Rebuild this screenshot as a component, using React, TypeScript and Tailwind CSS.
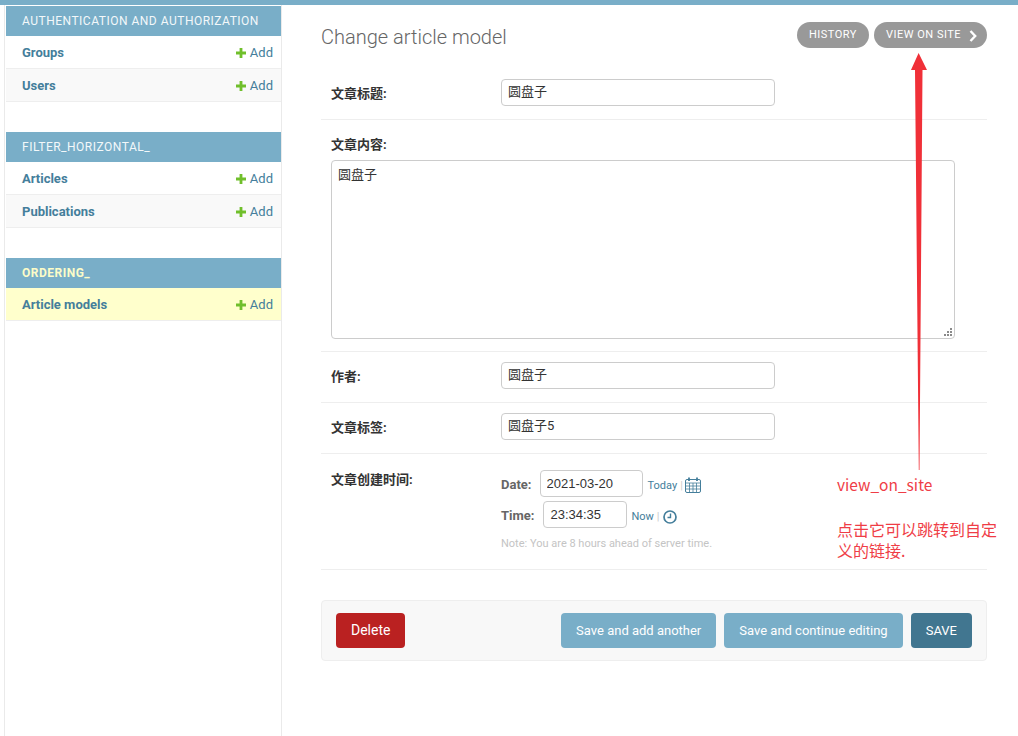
const font = "font-['Roboto','Noto_Sans_CJK_SC',sans-serif]";

const modules = [
  { title: "AUTHENTICATION AND AUTHORIZATION", rows: ["Groups", "Users"] },
  { title: "FILTER_HORIZONTAL_", rows: ["Articles", "Publications"] },
  { title: "ORDERING_", rows: ["Article models"], current: true },
];

function PlusIcon() {
  return (
    <svg width="10" height="10" viewBox="0 0 10 10" className="shrink-0">
      <path d="M3.6 0h2.8v3.6H10v2.8H6.4V10H3.6V6.4H0V3.6h3.6z" fill="#70bf2b" />
    </svg>
  );
}

function Sidebar() {
  return (
    <aside className="ml-[4px] w-[278px] shrink-0 border-x border-[#eaeaea] pl-px pt-px">
      {modules.map((mod) => (
        <div key={mod.title} className="mb-[30px]">
          <div className="flex h-[30px] items-center bg-[#79aec8] px-4 text-[12px] tracking-[0.5px]">
            <span className={mod.current ? "font-bold text-[#fcfcc8]" : "text-[#f3f8fa]"}>{mod.title}</span>
          </div>
          {mod.rows.map((row, i) => (
            <div
              key={row}
              className={`flex h-[33px] items-center justify-between border-b border-[#eeeeee] pl-4 pr-2 pt-[2px] text-[13px] ${
                mod.current ? "bg-[#ffffcc]" : i % 2 ? "bg-[#f9f9f9]" : "bg-white"
              }`}
            >
              <span className="font-bold text-[#447e9b]">{row}</span>
              <span className="flex items-center gap-[4px] text-[#447e9b]">
                <PlusIcon />
                Add
              </span>
            </div>
          ))}
        </div>
      ))}
    </aside>
  );
}

function TextRow({ label, value, className }: { label: string; value: string; className: string }) {
  return (
    <div className={`flex items-start border-b border-[#eeeeee] pl-[10px] ${className}`}>
      <label className="mt-[7px] w-[170px] text-[13px] font-bold leading-[16px] text-[#333333]">{label}</label>
      <input
        readOnly
        value={value}
        className="h-[27px] w-[274px] rounded-[4px] border border-[#cccccc] px-[6px] pb-[4px] text-[13px] text-[#333333] outline-none"
      />
    </div>
  );
}

function CalendarIcon() {
  return (
    <svg width="16" height="16" viewBox="0 0 16 16" fill="none" stroke="#447e9b" strokeWidth="1" className="mt-[2px]">
      <rect x="0.5" y="2.5" width="15" height="13" rx="1.5" />
      <path d="M0.5 6h15M0.5 9h15M0.5 12h15M4.5 6v9M8 6v9M11.5 6v9" strokeWidth="0.8" />
      <path d="M4 0.5v3.5M12 0.5v3.5" strokeWidth="1.8" />
    </svg>
  );
}

function ClockIcon() {
  return (
    <svg width="14" height="14" viewBox="0 0 14 14" fill="none" stroke="#447e9b" className="mt-[4px]">
      <circle cx="7" cy="7" r="6" strokeWidth="1.7" />
      <path d="M7.5 3.5v4H4.5" strokeWidth="1.4" />
    </svg>
  );
}

function DateTimeRow() {
  return (
    <div className="flex h-[116px] items-start border-b border-[#eeeeee] pl-[10px] pt-[16px]">
      <label className="mt-[2px] w-[170px] text-[13px] font-bold leading-[16px] text-[#333333]">文章创建时间:</label>
      <div>
        <div className="flex items-center text-[11px]">
          <span className="mr-[8px] mt-[2px] text-[13px] font-bold leading-[16px] text-[#666666]">Date:</span>
          <input
            readOnly
            value="2021-03-20"
            className="h-[27px] w-[103px] rounded-[4px] border border-[#cccccc] px-[6px] font-['Liberation_Sans',sans-serif] text-[13px] text-[#333333] outline-none"
          />
          <span className="ml-[5px] mt-[5px] text-[#447e9b]">Today</span>
          <span className="ml-[3px] mr-[2px] mt-[5px] text-[#cccccc]">|</span>
          <CalendarIcon />
        </div>
        <div className="mt-[4px] flex items-center text-[11px]">
          <span className="mr-[9px] mt-[3px] text-[13px] font-bold leading-[16px] text-[#666666]">Time:</span>
          <input
            readOnly
            value="23:34:35"
            className="h-[27px] w-[84px] rounded-[4px] border border-[#cccccc] px-[6px] font-['Liberation_Sans',sans-serif] text-[13px] text-[#333333] outline-none"
          />
          <span className="ml-[4px] mt-[5px] text-[#447e9b]">Now</span>
          <span className="ml-[3px] mr-[3px] mt-[5px] text-[#cccccc]">|</span>
          <ClockIcon />
        </div>
        <p className="mt-[9px] text-[11px] leading-[13px] text-[#c4c4c4]">Note: You are 8 hours ahead of server time.</p>
      </div>
    </div>
  );
}

function SubmitRow() {
  const save = "flex h-[35px] items-center rounded-[4px] bg-[#79aec8] px-[15px] text-[13px] text-white";
  return (
    <div className="mt-[30px] flex h-[61px] items-center justify-between rounded-[4px] border border-[#eeeeee] bg-[#f8f8f8] px-[14px]">
      <button className="h-[35px] rounded-[4px] bg-[#ba2121] px-[15px] text-[14px] text-white">Delete</button>
      <div className="flex gap-2">
        <button className={save}>Save and add another</button>
        <button className={save}>Save and continue editing</button>
        <button className="flex h-[35px] items-center rounded-[4px] bg-[#417690] px-[15px] text-[13px] text-white">SAVE</button>
      </div>
    </div>
  );
}

function Annotation() {
  return (
    <>
      <svg width="20" height="420" viewBox="0 0 20 420" className="absolute left-[910px] top-[53px]">
        <path d="M8.6 0L17 17H12.5L9.5 417L8.8 417L5 17H1z" fill="#f03038" />
      </svg>
      <div className="absolute left-[837px] top-[474px] w-[170px] font-['Noto_Sans_CJK_SC',sans-serif] text-[16px] leading-[21px] text-[#ef3d46]">
        <div className="text-[15.5px]">view_on_site</div>
        <div className="mt-[24px]">点击它可以跳转到自定义的链接.</div>
      </div>
    </>
  );
}

export default function App() {
  return (
    <div className={`relative h-[736px] overflow-hidden bg-white ${font}`}>
      <div className="h-[5px] bg-[#79aec8]" />
      <div className="flex h-[731px]">
        <Sidebar />
        <main className="ml-[39px] w-[666px]">
          <div className="flex h-[74px] items-start justify-between pt-[17px]">
            <h1 className="mt-[3px] text-[20px] font-light leading-[24px] text-[#666666]">Change article model</h1>
            <div className="flex gap-[5px] text-[11px] tracking-[0.5px] text-white">
              <span className="flex h-[26px] w-[72px] items-center justify-center rounded-[13px] bg-[#999999] pt-px">HISTORY</span>
              <span className="flex h-[26px] w-[113px] items-center justify-between rounded-[13px] bg-[#999999] pl-[12px] pr-[10px] pt-px">
                VIEW ON SITE
                <svg width="8" height="12" viewBox="0 0 8 12" fill="none" stroke="white" strokeWidth="2.4">
                  <path d="M1.5 1L6.2 6L1.5 11" />
                </svg>
              </span>
            </div>
          </div>

          <TextRow label="文章标题:" value="圆盘子" className="h-[41px]" />

          <div className="h-[232px] border-b border-[#eeeeee] pl-[10px] pt-[17px]">
            <label className="block text-[13px] font-bold leading-[16px] text-[#333333]">文章内容:</label>
            <div className="relative mt-[7px] w-[624px]">
              <textarea
                readOnly
                value="圆盘子"
                className="block h-[179px] w-full resize-none rounded-[4px] border border-[#cccccc] px-[6px] py-[4px] text-[13px] text-[#333333] outline-none"
              />
              <svg width="9" height="9" viewBox="0 0 9 9" fill="#8a8a8a" className="absolute bottom-[2px] right-[2px]">
                <rect x="6" y="0" width="2" height="2" />
                <rect x="3" y="3" width="2" height="2" />
                <rect x="6" y="3" width="2" height="2" />
                <rect x="0" y="6" width="2" height="2" />
                <rect x="3" y="6" width="2" height="2" />
                <rect x="6" y="6" width="2" height="2" />
              </svg>
            </div>
          </div>

          <TextRow label="作者:" value="圆盘子" className="h-[51px] pt-[10px]" />
          <TextRow label="文章标签:" value="圆盘子5" className="h-[51px] pt-[10px]" />
          <DateTimeRow />
          <SubmitRow />
        </main>
      </div>
      <Annotation />
    </div>
  );
}
